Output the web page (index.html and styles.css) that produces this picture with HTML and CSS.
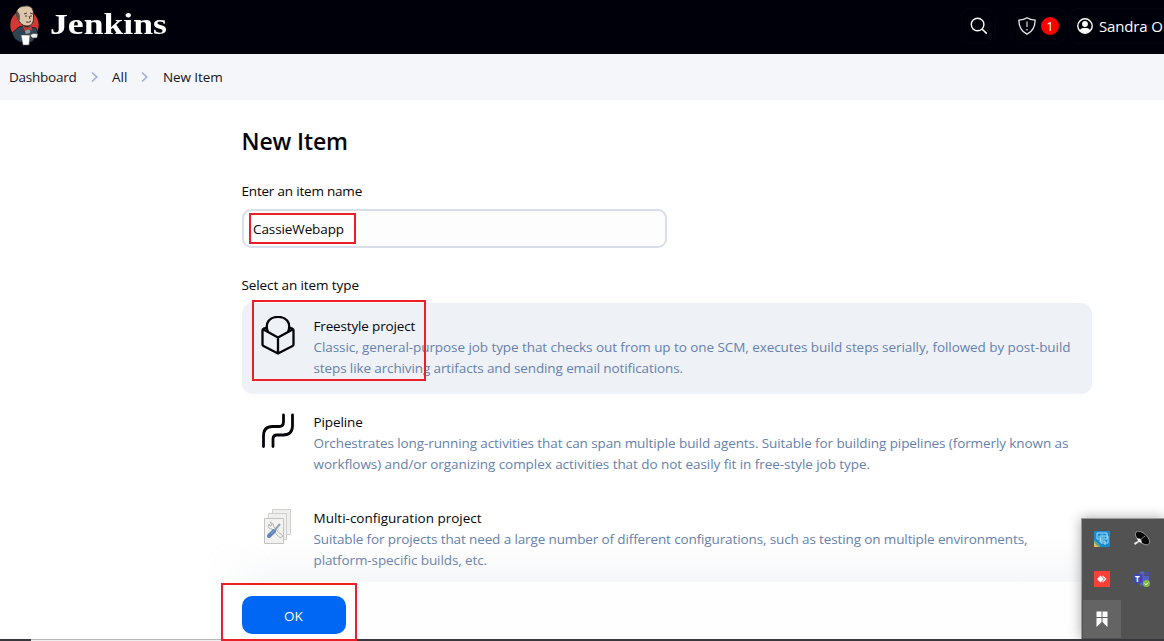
FILE: index.html
```html
<!DOCTYPE html>
<html lang="en">
<head>
<meta charset="utf-8">
<title>New Item - Jenkins</title>
<link rel="stylesheet" href="styles.css">
</head>
<body>
<div class="page">
  <header class="header">
    <svg class="logo" width="32" height="42" viewBox="0 0 32 42">
      <ellipse cx="14.500" cy="20" rx="14.200" ry="15" fill="#d33833"/>
      <path d="M2 28L9 22 14 21 20 22 26 23 28 29 25 33 22 37 10 37 5 34Z" fill="#2f4555" stroke="#101820" stroke-width=".8"/>
      <path d="M6.500 9C6 4 10 1 15 1C22 0 24 5 23.500 11C24 17 22 21 17 21C12 21 8 17 6.500 9Z" fill="#dfc5aa" stroke="#26211f" stroke-width=".9"/>
      <path d="M7 6Q5 12 9 17Q11 12 9 8Z" fill="#5d554d"/>
      <path d="M14 9L17 8M20 8L23 9M15 11H17M20 11H22M19 11L20 14M16 17Q19 18 21 16" fill="none" stroke="#463932" stroke-width="1"/>
      <path d="M13 21L17 23 21 21 20 28 16 29Z" fill="#8d9ba6"/>
      <path d="M14 21.500L18 23 22 21 22 26 18 24 14 26Z" fill="#d33833" stroke="#712827" stroke-width=".5"/>
      <path d="M11 30H20L19 40H13Z" fill="#fff" stroke="#555" stroke-width=".6"/>
      <path d="M20 30Q23 27 28 29L27 33 22 33Z" fill="#eee" stroke="#26211f" stroke-width=".6"/>
    </svg>
    <span class="brand">Jenkins</span>
    <div class="tools">
      <span class="tool search"><svg width="18" height="18" viewBox="0 0 18 18"><circle cx="7.600" cy="7.500" r="6.300" fill="none" stroke="#fff" stroke-width="1.400"/><path d="M12.200 12.200L16.800 16.600" stroke="#fff" stroke-width="1.500"/></svg></span>
      <span class="tool alert"><svg width="18" height="18" viewBox="0 0 18 18"><path d="M9 .8Q6 3 .9 3.200C.9 10 3.500 14.500 9 17.200C14.500 14.500 17.100 10 17.100 3.200Q12 3 9 .8Z" fill="none" stroke="#e8e8e8" stroke-width="1.300"/><path d="M9 4.500V10M9 12V13.500" stroke="#ddd" stroke-width="1.200"/></svg><b class="badge">1</b></span>
      <span class="tool user"><svg width="16" height="16" viewBox="0 0 16 16"><circle cx="8" cy="8" r="7.200" fill="none" stroke="#fff" stroke-width="1.400"/><circle cx="8" cy="6" r="2.900" fill="#fff"/><path d="M2.700 12.500Q3.500 10 6 10H10Q12.500 10 13.300 12.500Q11 15 8 15T2.700 12.500Z" fill="#fff"/></svg><span class="username">Sandra O</span></span>
    </div>
  </header>
  <nav class="crumbs">
    <span class="crumb-dashboard">Dashboard</span>
    <svg class="chev" width="7" height="12" viewBox="0 0 7 12"><path d="M1 1.500L5.800 6 1 10.500"/></svg>
    <span class="crumb-all">All</span>
    <svg class="chev" width="7" height="12" viewBox="0 0 7 12"><path d="M1 1.500L5.800 6 1 10.500"/></svg>
    <span class="crumb-new">New Item</span>
  </nav>
  <main class="main">
    <h1 class="title">New Item</h1>
    <div class="label name-label">Enter an item name</div>
    <div class="field"><span class="field-value">CassieWebapp</span></div>
    <div class="label type-label">Select an item type</div>
    <ul class="types">
      <li class="type selected">
        <svg class="icon" width="36" height="40" viewBox="0 0 36 40"><g fill="none" stroke="#05050a" stroke-width="2.300" stroke-linejoin="round" stroke-linecap="round"><path d="M5.500 12L3.500 12.700Q2.500 13.100 2.500 14.500V28.500Q2.500 29.500 3.500 30L18 37.500 32.500 30Q33.500 29.500 33.500 28.500V14.500Q33.500 13.100 32.500 12.700L30.500 12M3 13.300L18 21.500 33 13.300M18 21.500V37.500"/><path d="M7.800 15.500C4.500 6.500 10 .9 18 .9S31.500 6.500 28.200 15.500"/></g></svg>
        <div class="copy"><div class="name n1">Freestyle project</div><div class="desc d1">Classic, general-purpose job type that checks out from up to one SCM, executes build steps serially, followed by post-build</div><div class="desc d2">steps like archiving artifacts and sending email notifications.</div></div>
      </li>
      <li class="type">
        <svg class="icon" width="36" height="40" viewBox="0 0 36 40"><path d="M3.500 34.500V24Q3.500 14.500 12.500 14.500H19Q23.500 14.500 23.500 10V3M13 34.500V27Q13 23 17 23H23Q32.500 23 32.500 13.500V3" fill="none" stroke="#05050a" stroke-width="2.800" stroke-linecap="round"/></svg>
        <div class="copy"><div class="name n2">Pipeline</div><div class="desc d3">Orchestrates long-running activities that can span multiple build agents. Suitable for building pipelines (formerly known as</div><div class="desc d4">workflows) and/or organizing complex activities that do not easily fit in free-style job type.</div></div>
      </li>
      <li class="type">
        <svg class="icon" width="36" height="40" viewBox="0 0 36 40"><g fill="#efefee" stroke="#cfcfcd"><path d="M12.500 1.500H30.500V26.500H12.500Z"/><path d="M8.500 5.500H26.500V31.500H8.500Z"/><path d="M4.500 10.500H23.500V35.500H4.500Z" fill="#f2f2f1" stroke="#c4c4c2"/></g><g transform="translate(0 -1)"><path d="M9 17Q7 22 12 22L18 29Q20 32 22 30T19 26L14 20Q14 16 10 15L12 18 10 19Z" fill="#f1f1f0" stroke="#b7b7b5"/><path d="M20 17L14 24" stroke="#94a2ad" stroke-width="2"/><path d="M14 24L9 29" stroke="#5a84ba" stroke-width="4" stroke-linecap="round"/><path d="M15 22L11 27" stroke="#88aad2"/></g></svg>
        <div class="copy"><div class="name n3">Multi-configuration project</div><div class="desc d5">Suitable for projects that need a large number of different configurations, such as testing on multiple environments,</div><div class="desc d6">platform-specific builds, etc.</div></div>
      </li>
    </ul>
  </main>
  <div class="haze"></div>
  <footer class="footer"><button class="ok">OK</button></footer>
  <div class="edge"><i class="edge-light"></i></div>
  <div class="mark mark-name"></div>
  <div class="mark mark-type"></div>
  <div class="mark mark-ok"></div>
  <aside class="tray">
    <span class="cell"><svg width="16" height="16" viewBox="0 0 16 16"><rect width="16" height="16" rx="1" fill="#168bd2"/><path d="M0 11L5 16H0Z" fill="#e4bd54"/><path d="M0 10Q4 12 6 16" fill="none" stroke="#77b66d" stroke-width="1.200"/><path d="M3 2H13V8H3ZM6 5H14V12H7ZM5 10H11V14" fill="none" stroke="#a9ddf5"/><path d="M4 6H11M8 3V11" stroke="#6fc3ea"/></svg></span>
    <span class="cell"><svg width="16" height="16" viewBox="0 0 16 16"><ellipse cx="8.500" cy="7" rx="8.800" ry="4.500" transform="rotate(43 8.500 7)" fill="#050505" stroke="#b5b5b5" stroke-width=".7"/><path d="M3 7L7 8 8 12 5 11 1 14 0 12 4 10Z" fill="#eee"/><path d="M6 9L11 5" stroke="#999" stroke-width=".8"/></svg></span>
    <span class="cell"><svg width="16" height="16" viewBox="0 0 16 16"><path fill="#fb4038" d="M0 0H16V16H0Z"/><path fill="#fff" d="M6.500 4.500L10 8 6.500 11.500 3 8ZM9 4.500L12.500 8 9 11.500 8.200 10.700 10.900 8 8.200 5.300Z"/></svg></span>
    <span class="cell teams"><svg width="16" height="16" viewBox="0 0 16 16"><circle cx="8" cy="2.500" r="2.500" fill="#5863be"/><circle cx="13.500" cy="2.800" r="2" fill="#454bb0"/><path d="M5 5H15V10Q14 15 9 15Q5 15 4 11Z" fill="#555fc0"/><rect y="3" width="8.500" height="9" rx="1" fill="#4148b5"/><circle cx="12.500" cy="12.500" r="3.500" fill="#83b84b"/><path d="M10.800 12.500L12 13.800 14.200 11.500" fill="none" stroke="#fff"/></svg><b class="teams-letter">T</b></span>
    <span class="cell active"><svg width="12" height="16" viewBox="0 0 12 16"><path d="M.5 .5H5.500V6H.5ZM6.500 .5H11.500V6H6.500ZM.5 7H5.500V11L.5 16ZM6.500 7H11.500V16L6.500 11Z" fill="#fff"/></svg></span>
  </aside>
</div>
</body>
</html>
```
FILE: styles.css
```css
* { box-sizing: border-box; }
body { margin: 0; font-family: "Open Sans", "Noto Sans", sans-serif; font-size: 13.5px; color: #14141f; }
.page { position: relative; width: 1164px; height: 641px; overflow: hidden; background: #fff; display: flex; flex-direction: column; }
.header { flex: 0 0 54px; background: #00000a; color: #fff; display: flex; align-items: flex-start; padding-left: 10px; }
.logo { flex: none; margin-top: 5px; }
.brand { flex: none; margin: 6px 0 0 8px; width: 116px; font: bold 29px/36px "Liberation Serif", serif; transform: scaleX(1.23); transform-origin: left; white-space: nowrap; }
.tools { display: flex; flex: none; margin-left: 795px; padding-top: 8px; }
.tool { display: flex; align-items: center; height: 36px; flex: none; border: 1px solid #05050f; border-radius: 9px; }
.search { width: 35px; justify-content: center; }
.alert { width: 56px; margin-left: 14px; padding-left: 7px; gap: 5px; }
.user { width: 130px; margin-left: 3px; padding-left: 7px; gap: 6px; font-size: 15px; letter-spacing: -.15px; }
.username { white-space: nowrap; }
.badge { width: 18px; height: 18px; border-radius: 50%; background: #f00; font: 13px/18px "Open Sans", sans-serif; text-align: center; }
.crumbs { flex: 0 0 46px; background: #f5f6f9; display: flex; align-items: center; padding-left: 9px; }
.crumbs span { white-space: nowrap; }
.crumb-dashboard { width: 82px; letter-spacing: -.25px; }
.crumb-all { width: 15px; margin-left: 14px; }
.crumb-all + .chev { margin-left: 14px; }
.crumb-new { margin-left: 15px; letter-spacing: -.1px; }
.chev { flex: none; fill: none; stroke: #9bafd3; stroke-width: 1.6; }
.main { width: 850px; margin-left: 242px; color: #05050a; }
.title { margin: 25px 0 0 -.5px; font-size: 23px; line-height: 32px; font-weight: 600; letter-spacing: -.12px; }
.label { line-height: 20px; white-space: nowrap; margin-left: -.5px; }
.name-label { margin-top: 24px; letter-spacing: -.2px; }
.field { width: 425px; height: 39px; margin-top: 8px; border: 2px solid #d8deea; border-radius: 9px; background: #fdfdfd; padding: 8px 9px; line-height: 20px; letter-spacing: -.1px; }
.type-label { margin-top: 27px; letter-spacing: -.1px; }
.types { list-style: none; margin: 8px 0 0; padding: 0; display: flex; flex-direction: column; gap: 5px; }
.type { display: flex; height: 91px; padding: 13px 0 0 18px; border-radius: 10px; }
.selected { background: #eef1f6; }
.icon { flex: none; }
.copy { margin-left: 17.5px; line-height: 21px; }
.name, .desc { white-space: nowrap; }
.name { color: #05050a; }
.desc { color: #6681ae; }
.n1 { letter-spacing: -.16px; }
.n2 { letter-spacing: -.1px; }
.d1 { letter-spacing: -.07px; }
.d2 { letter-spacing: -.115px; }
.d3 { letter-spacing: -.095px; }
.d4 { letter-spacing: -.055px; }
.d5 { letter-spacing: -.123px; }
.d6 { letter-spacing: -.1px; }
.haze { position: absolute; left: 200px; top: 536px; width: 964px; height: 46px; background: linear-gradient(transparent, #b8c2d31f); -webkit-mask-image: linear-gradient(90deg, transparent, #000 80px); mask-image: linear-gradient(90deg, transparent, #000 80px); }
.footer { position: absolute; left: 242px; top: 582px; width: 922px; height: 59px; background: #fefefe; padding-top: 14px; }
.ok { display: block; width: 104px; height: 38px; padding: 2px 1px 0 0; border: 0; border-radius: 10px; background: #0067f5; color: #fff; font: 13.5px/36px "Open Sans", sans-serif; }
.edge { position: absolute; left: 0; top: 639px; width: 1164px; height: 2px; background: #38383c; }
.edge-light { display: block; width: 288px; height: 2px; margin-left: 31px; background: linear-gradient(#b9b9b9 50%, #eee 50%); }
.mark { position: absolute; border: 2px solid #ea2028; }
.mark-name { left: 249px; top: 213px; width: 107px; height: 31px; }
.mark-type { left: 252px; top: 300px; width: 174px; height: 81px; }
.mark-ok { left: 221px; top: 583px; width: 136px; height: 58px; }
.tray { position: absolute; left: 1081px; top: 518px; width: 83px; height: 121px; background: #525252; border: solid #9b9b9b; border-width: 1px 0 0 1px; box-shadow: 0 0 12px #0005; display: grid; grid-template-columns: 40px 40px; grid-template-rows: 40px 40px 40px; clip-path: inset(-20px 0 0 -20px); }
.cell { position: relative; display: flex; align-items: center; justify-content: center; }
.active { background: #646464; width: 38px; height: 38px; margin: 1px; }
.teams-letter { position: absolute; left: 13px; top: 14px; color: #fff; font: bold 8px/11px "Open Sans", sans-serif; }
```
